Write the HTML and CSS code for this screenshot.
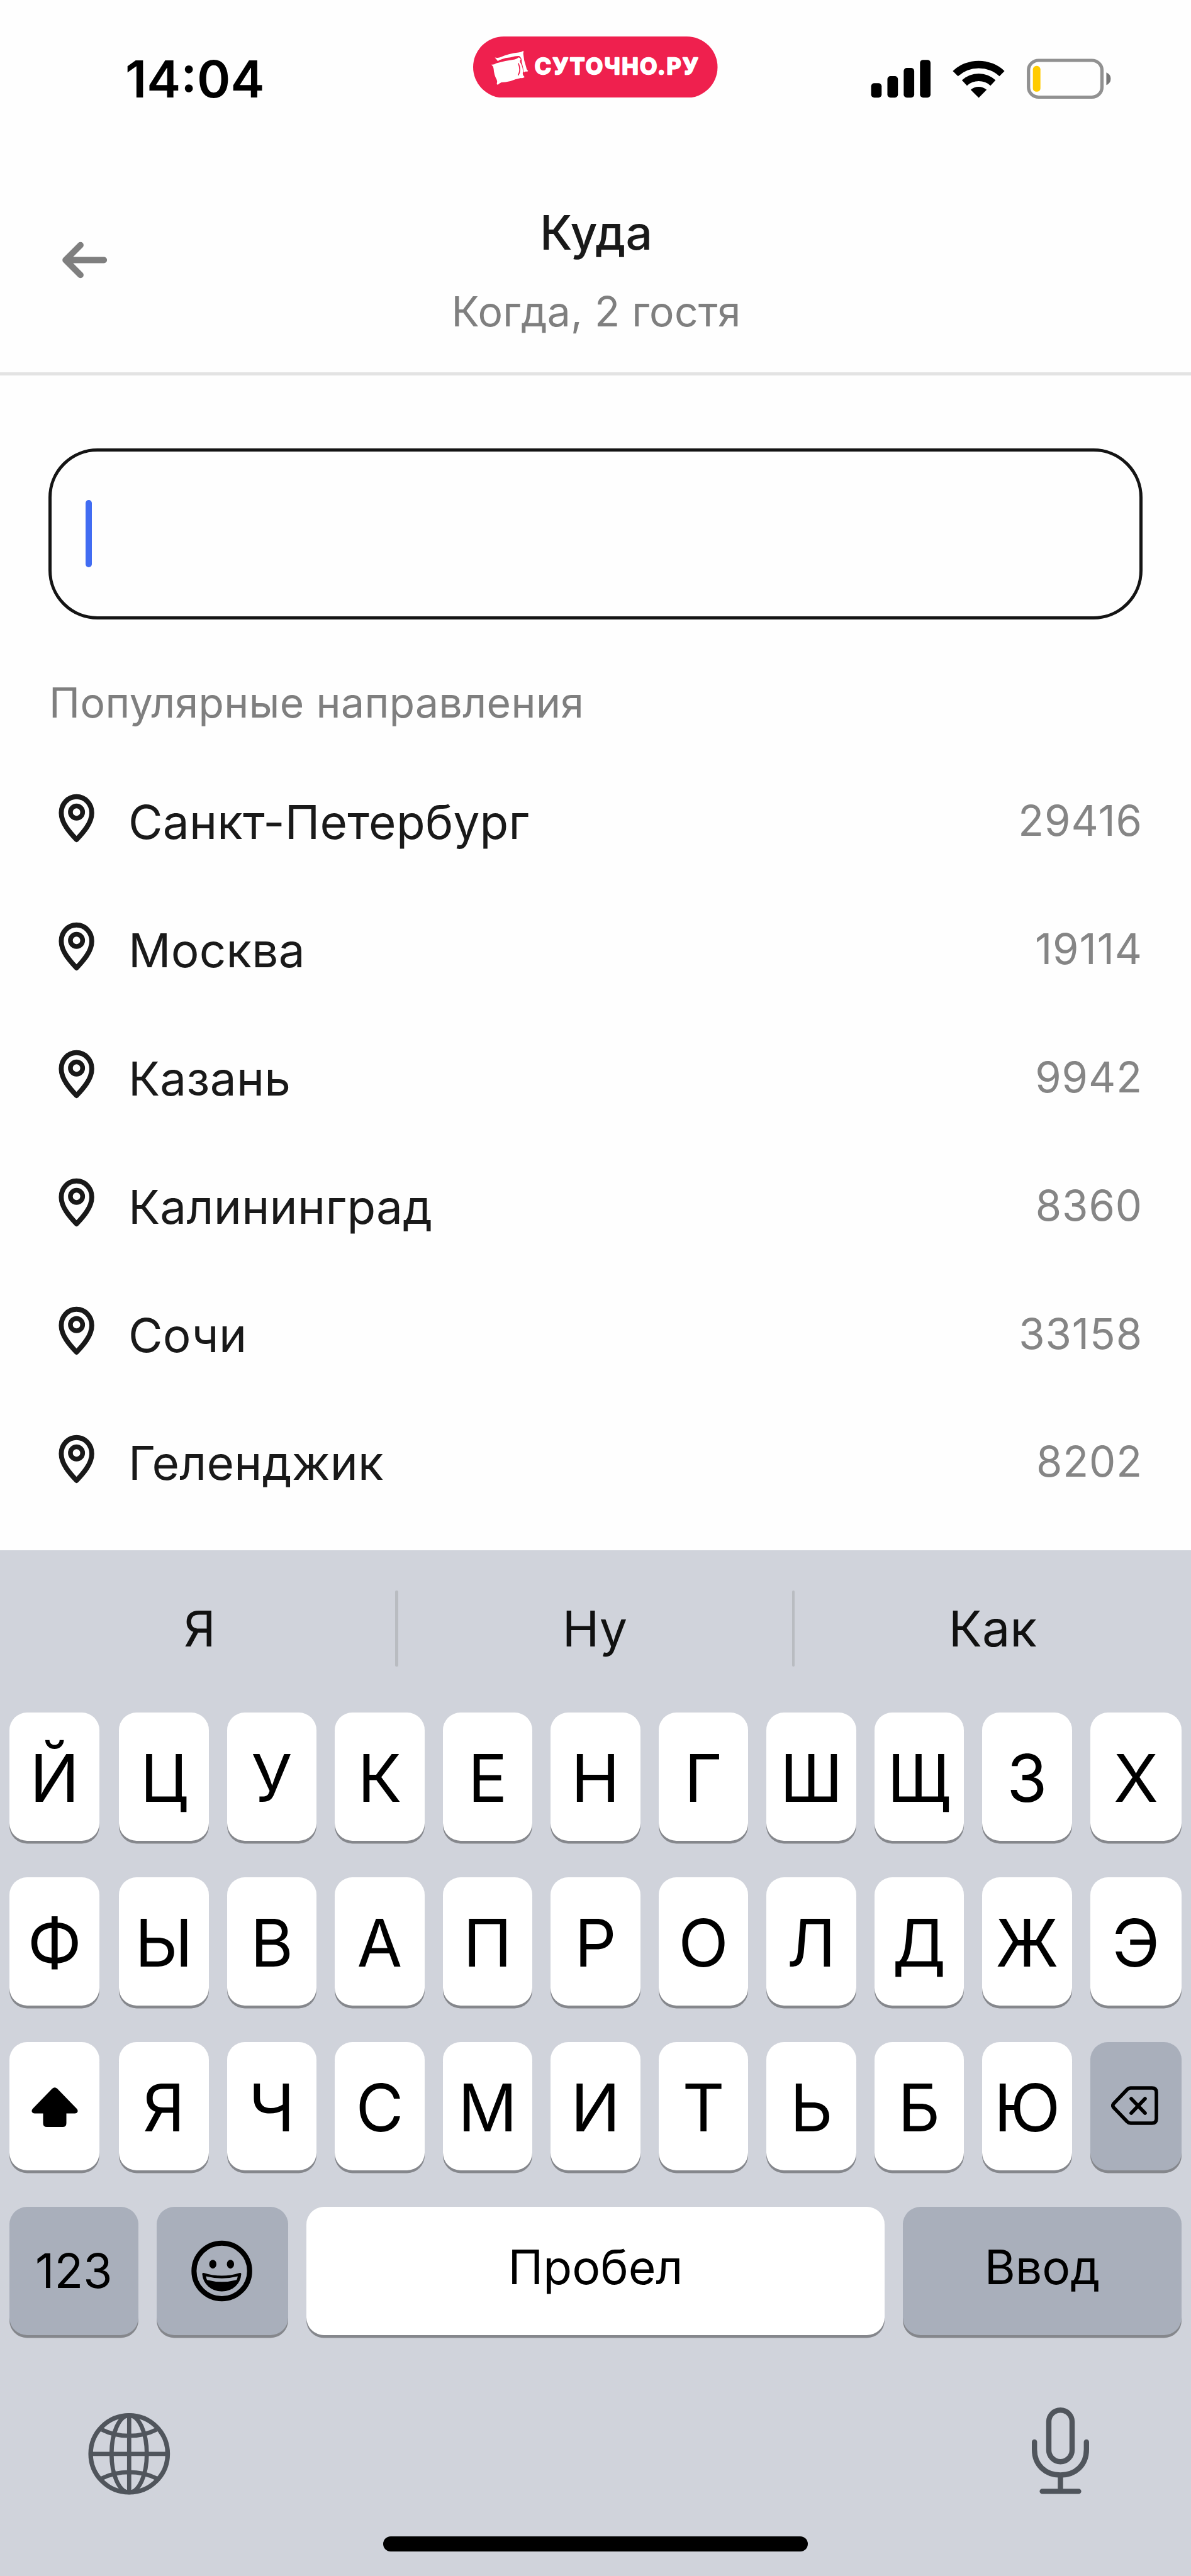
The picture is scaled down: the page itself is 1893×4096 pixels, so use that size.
FILE: index.html
```html
<!DOCTYPE html>
<html lang="ru">
  <head>
    <meta charset="UTF-8" />
    <meta name="viewport" content="width=device-width, initial-scale=1.0" />
    <title>Куда</title>
    <link rel="stylesheet" href="styles.css">
  </head>
  <body>
    <!-- Иконка метки, общая для всех направлений -->
    <svg class="defs" width="0" height="0">
      <symbol id="pin" viewBox="0 0 420 420">
        <path d="M210 330C170 288 120 232 120 172C120 119 160 77 210 77C260 77 300 119 300 172C300 232 250 288 210 330Z" fill="none" stroke="#191919" stroke-width="29" stroke-linejoin="round" />
        <circle cx="210" cy="168" r="36" fill="none" stroke="#191919" stroke-width="28" />
      </symbol>
    </svg>

    <div class="status">
      <div class="time">14:04</div>
      <svg class="brand" viewBox="87 64 1395 362" preserveAspectRatio="none">
        <rect x="87" y="64" width="1395" height="362" rx="176" ry="181" fill="#ef204e" />
        <path d="M211 188Q226 192 240 187Q290 165 345 159Q360 157 374 148Q376 153 373 165Q376 205 389 242Q390 257 401 268Q396 272 385 271Q380 275 375 274Q374 250 364 215Q366 190 350 179Q330 178 300 187Q270 189 250 198Q235 201 228 210Q222 200 211 188Z" fill="#fff" />
        <path d="M191 230Q205 232 220 222Q270 206 325 199Q338 196 346 187Q357 188 359 198Q352 204 355 215Q376 250 370 285Q372 298 381 303Q372 312 360 309Q330 314 300 327Q270 334 248 335Q236 341 228 349Q222 348 222 342Q227 334 222 320Q206 290 204 255Q202 238 191 230Z" fill="#fff" />
        <path d="M345 222Q362 262 344 293" fill="none" stroke="#ef204e" stroke-width="6" />
        <text class="brand-text" x="438" y="288" textLength="942" lengthAdjust="spacingAndGlyphs">СУТОЧНО.РУ</text>
      </svg>
      <svg class="indicators" viewBox="90 75 1370 240" preserveAspectRatio="none">
        <rect x="92" y="221" width="60" height="85" rx="18" />
        <rect x="185" y="179" width="60" height="127" rx="18" />
        <rect x="278" y="131" width="60" height="175" rx="18" />
        <rect x="371" y="83" width="60" height="223" rx="18" />
        <path d="M558 149A210 210 0 0 1 853 149L824 180A170 170 0 0 0 588 180Z" />
        <path d="M610 203A138 138 0 0 1 802 203L773 235A98 98 0 0 0 639 235Z" />
        <path d="M660 260A66 66 0 0 1 751 260L706 307Z" />
        <rect x="990" y="86" width="419" height="217" rx="58" fill="none" stroke="#919191" stroke-width="19" />
        <rect x="1015" y="119" width="43" height="152" rx="20" fill="#ffcb00" />
        <path d="M1434 158Q1459 168 1459 195Q1459 222 1434 232Z" fill="#777" />
      </svg>
    </div>

    <div class="header">
      <svg class="back" viewBox="0 0 420 420">
        <path d="M174 125L86 213L174 301M86 213H312" fill="none" stroke="#7f7f7f" stroke-width="37" stroke-linecap="round" stroke-linejoin="round" />
      </svg>
      <div class="titles">
        <div class="title">Куда</div>
        <div class="subtitle">Когда, 2 гостя</div>
      </div>
    </div>

    <div class="search"><span class="caret"></span></div>

    <div class="label">Популярные направления</div>
    <div class="list">
      <div class="row"><svg class="pin"><use href="#pin" /></svg><span class="city">Санкт-Петербург</span><span class="count">29416</span></div>
      <div class="row"><svg class="pin"><use href="#pin" /></svg><span class="city">Москва</span><span class="count">19114</span></div>
      <div class="row"><svg class="pin"><use href="#pin" /></svg><span class="city">Казань</span><span class="count">9942</span></div>
      <div class="row"><svg class="pin"><use href="#pin" /></svg><span class="city">Калининград</span><span class="count">8360</span></div>
      <div class="row"><svg class="pin"><use href="#pin" /></svg><span class="city">Сочи</span><span class="count">33158</span></div>
      <div class="row"><svg class="pin"><use href="#pin" /></svg><span class="city">Геленджик</span><span class="count">8202</span></div>
    </div>

    <!-- Клавиатура -->
    <div class="keyboard">
      <div class="suggestions">
        <span>Я</span>
        <i></i>
        <span>Ну</span>
        <i></i>
        <span>Как</span>
      </div>
      <div class="keys">
        <div class="key">Й</div><div class="key">Ц</div><div class="key">У</div><div class="key">К</div><div class="key">Е</div><div class="key">Н</div><div class="key">Г</div><div class="key">Ш</div><div class="key">Щ</div><div class="key">З</div><div class="key">Х</div>
      </div>
      <div class="keys">
        <div class="key">Ф</div><div class="key">Ы</div><div class="key">В</div><div class="key">А</div><div class="key">П</div><div class="key">Р</div><div class="key">О</div><div class="key">Л</div><div class="key">Д</div><div class="key">Ж</div><div class="key">Э</div>
      </div>
      <div class="keys">
        <div class="key">
          <svg class="shift" viewBox="0 0 74 63"><path d="M33 2Q37 -1.500 41 2L72 34Q74.500 37 73 39.500Q72 41.500 69 41.500H55.500V57Q55.500 63 49.500 63H24.500Q18.500 63 18.500 57V41.500H5Q2 41.500 1 39.500Q-.5 37 2 34Z" /></svg>
        </div>
        <div class="key">Я</div><div class="key">Ч</div><div class="key">С</div><div class="key">М</div><div class="key">И</div><div class="key">Т</div><div class="key">Ь</div><div class="key">Б</div><div class="key">Ю</div>
        <div class="key gray">
          <svg class="erase" viewBox="0 0 75 62"><path d="M31 3H65Q72 3 72 10V52Q72 59 65 59H31Q28 59 25.500 56.500L4 34Q1.500 31 4 28L25.500 5.500Q28 3 31 3ZM32 20L54 43M54 20L32 43" fill="none" stroke="#000" stroke-width="5.600" stroke-linecap="round" stroke-linejoin="round" /></svg>
        </div>
      </div>
      <div class="keys bottom">
        <div class="key gray num">123</div>
        <div class="key gray">
          <svg class="smile" viewBox="0 0 510 510">
            <circle cx="258" cy="252" r="164" fill="none" stroke="#000" stroke-width="30" />
            <ellipse cx="205" cy="212" rx="21" ry="26" />
            <ellipse cx="309" cy="212" rx="21" ry="26" />
            <path d="M149 270Q258 304 366 270C362 324 320 366 258 366C196 366 154 324 149 270Z" stroke="#000" stroke-width="13" stroke-linejoin="round" />
            <path d="M165 284Q258 308 352 284Q350 296 345 305Q258 328 171 305Q166 296 165 284Z" fill="#a9afbb" />
          </svg>
        </div>
        <div class="key word">Пробел</div>
        <div class="key gray word">Ввод</div>
      </div>
      <div class="tools">
        <svg class="globe" viewBox="0 0 570 570">
          <g fill="none" stroke="#50555c" stroke-width="25">
            <circle cx="283" cy="281" r="227" stroke-width="27" />
            <ellipse cx="283" cy="281" rx="104" ry="227" />
            <path d="M283 54V508M56 281H510M122 138Q195 175 283 175Q371 175 444 138M122 426Q195 389 283 389Q371 389 444 426" />
          </g>
        </svg>
        <svg class="mic" viewBox="0 0 91 138">
          <g fill="none" stroke="#50555c" stroke-width="8.400" stroke-linecap="round">
            <rect x="27" y="4.200" width="37" height="82" rx="18.500" />
            <path d="M4.200 55V67C4.200 92 22 107.500 45.500 107.500C69 107.500 86.800 92 86.800 67V55M45.500 108V132M16.600 133.400H74.400" />
          </g>
        </svg>
      </div>
      <div class="home"></div>
    </div>
  </body>
</html>
```
FILE: styles.css
```css
* {
  box-sizing: border-box;
}

body {
  margin: 0;
  width: 1893px;
  height: 4096px;
  display: flex;
  flex-direction: column;
  background: #fefefe;
  color: #191919;
  font-family: Inter, "Liberation Sans", sans-serif;
  overflow: hidden;
}

svg {
  display: block;
  flex: none;
}

.defs {
  position: absolute;
}

/* Status bar */
.status {
  height: 200px;
  display: flex;
  align-items: flex-start;
  padding: 57.700px 0 0 199px;
}

.time {
  width: 553px;
  margin-top: 18px;
  font-size: 81px;
  line-height: 100px;
  font-weight: 600;
  color: #000;
}

.brand {
  width: 388.500px;
  height: 97.600px;
}

.brand-text {
  font-size: 134px;
  font-weight: 700;
  letter-spacing: 9px;
  fill: #fff;
  stroke: #fff;
  stroke-width: 9px;
  stroke-linejoin: round;
}

.indicators {
  width: 381.700px;
  height: 64.700px;
  margin: 35.300px 0 0 243.600px;
}

/* Header */
.header {
  height: 397.300px;
  display: flex;
  align-items: flex-start;
  padding: 0 80.900px;
  border-bottom: 5px solid #e3e3e3;
}

.back {
  width: 113.250px;
  height: 113.250px;
  margin-top: 155.900px;
}

.titles {
  flex: 1;
  padding: 120.300px 111.250px 0 0;
  text-align: center;
}

.title {
  font-size: 75px;
  line-height: 100px;
  font-weight: 500;
}

.subtitle {
  margin-top: 30px;
  font-size: 66px;
  line-height: 90px;
  letter-spacing: .2px;
  color: #7f7f7f;
}

.search {
  flex: none;
  height: 272px;
  margin: 115.700px 77.400px 0;
  padding: 0 53.500px;
  display: flex;
  align-items: center;
  border: 5px solid #141414;
  border-radius: 78px;
}

.caret {
  width: 10px;
  height: 107px;
  border-radius: 5px;
  background: #416cf2;
}

.label {
  margin: 86.600px 78px 44px;
  font-size: 66px;
  line-height: 90px;
  letter-spacing: .4px;
  color: #7f7f7f;
}

.row {
  height: 203.800px;
  display: flex;
  align-items: center;
  padding: 0 77px 0 64.700px;
}

.pin {
  width: 113.250px;
  height: 113.250px;
  margin: 0 26px 10px 0;
}

.city {
  flex: 1;
  font-size: 74.700px;
  letter-spacing: .25px;
}

.count {
  margin-bottom: 5px;
  font-size: 67px;
  letter-spacing: .9px;
  color: #858585;
}

/* Keyboard */
.keyboard {
  flex: none;
  height: 1631px;
  margin-top: auto;
  padding: 0 14.900px;
  background: #d0d3db;
  color: #000;
}

.suggestions {
  height: 248px;
  margin: 0 -14.900px 10px;
  display: grid;
  grid-template-columns: 628px 4.500px 626px 4.500px 1fr;
  align-items: center;
  font-size: 79px;
  text-align: center;
  color: #111;
}

.suggestions span:first-child {
  padding-left: 7px;
}

.suggestions i {
  height: 121px;
  border-radius: 2px;
  background: #b9bcc1;
}

.keys {
  display: grid;
  grid-template-columns: 145.300px repeat(9, 142.300px) 145.300px;
  column-gap: 29.200px;
  margin-bottom: 58.200px;
}

.key {
  height: 203.800px;
  display: flex;
  align-items: center;
  justify-content: center;
  padding-top: 4px;
  border-radius: 28px;
  background: #fff;
  box-shadow: 0 4.500px 0 #85878c;
  font-size: 104px;
}

.key:first-child {
  width: 143.600px;
}

.key.gray {
  background: #a9afbb;
}

.bottom {
  grid-template-columns: 204.900px 209.200px 918.400px 443.300px;
  margin-bottom: 0;
}

.bottom .key:first-child {
  width: auto;
}

.key.num {
  padding-top: 0;
  font-size: 75px;
}

.key.word {
  padding: 0 0 12px;
  font-size: 75px;
}

.shift {
  width: 74px;
  height: 63px;
}

.erase {
  width: 75px;
  height: 62px;
  margin: 0 0 5px -3px;
}

.smile {
  width: 137.500px;
  height: 137.500px;
  margin: 0 3px 3px 0;
}

.tools {
  display: flex;
  justify-content: space-between;
  padding: 113.500px 147.500px 0 114.500px;
}

.globe {
  width: 153.700px;
  height: 153.700px;
}

.mic {
  width: 91px;
  height: 138px;
  margin-top: 2px;
}

.home {
  width: 674.500px;
  height: 24px;
  margin: 53.300px auto 0;
  border-radius: 12px;
  background: #000;
}
```
